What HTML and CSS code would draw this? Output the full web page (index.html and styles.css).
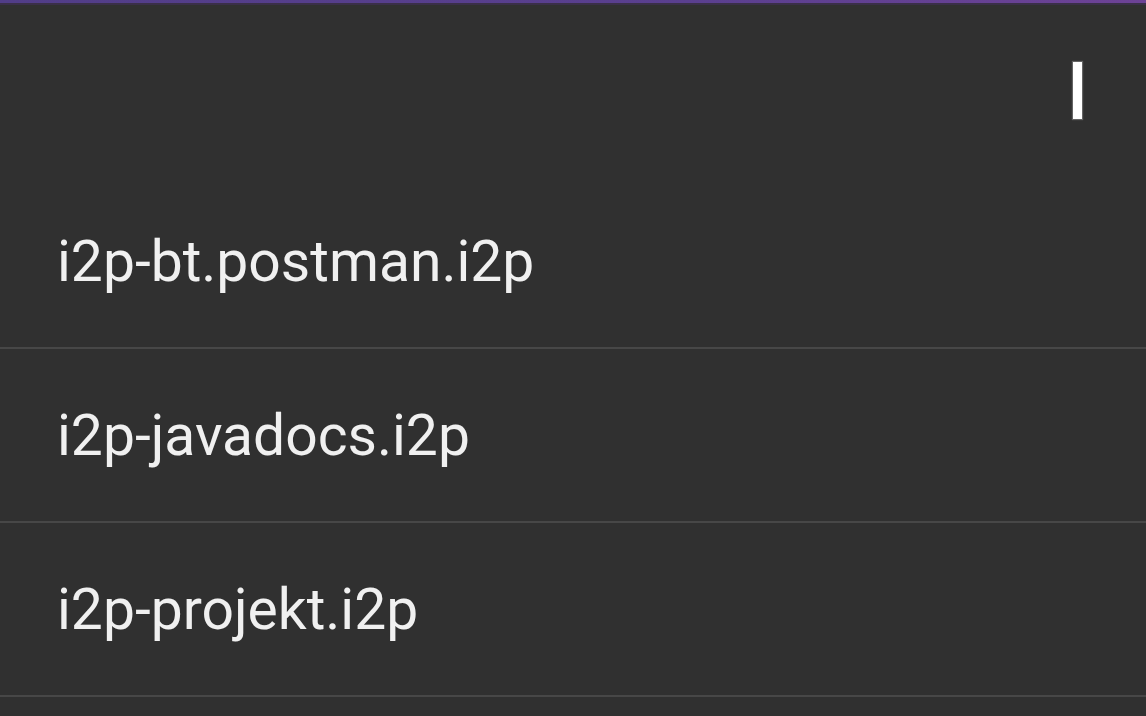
FILE: index.html
```html
<html>
	<head>
		<title>Addressbook</title>
		<link rel="stylesheet" href="styles.css">
	</head>
	<body>
		<div class="status-line"></div>
		<div class="toolbar">
			<div class="search">
				<span class="caret"></span>
			</div>
		</div>
		<ul class="hosts">
			<li>i2p-bt.postman.i2p</li>
			<li>i2p-javadocs.i2p</li>
			<li>i2p-projekt.i2p</li>
			<li class="more"></li>
		</ul>
	</body>
</html>
```

FILE: styles.css
```css
html, body {
	height: 100%;
}

body {
	margin: 0px;
	padding: 0px;
	background: #303030;
	color: #f0f0f0;
	font-family: Roboto, "Liberation Sans", sans-serif;
	overflow: hidden;
}

.status-line {
	height: 3px;
	background: linear-gradient(to right, #513d88, #5a3f8f 60%, #6d4296);
	border-bottom: 2px solid #3a2f48;
}

.toolbar {
	height: 170px;
	display: flex;
	align-items: center;
	justify-content: flex-end;
	padding-right: 64px;
}

.search {
	display: flex;
	align-items: center;
}

.caret {
	display: block;
	width: 9px;
	height: 57px;
	background: #ffffff;
	box-shadow: 0 0 1px 1px rgba(255, 255, 255, 0.25);
}

.hosts {
	list-style: none;
	margin: 0px;
	padding: 0px;
}

.hosts li {
	height: 172px;
	display: flex;
	align-items: center;
	padding-left: 57px;
	font-size: 57px;
	border-bottom: 2px solid #474747;
}

.hosts li.more {
	height: 20px;
	border-bottom: 0px;
}
```
